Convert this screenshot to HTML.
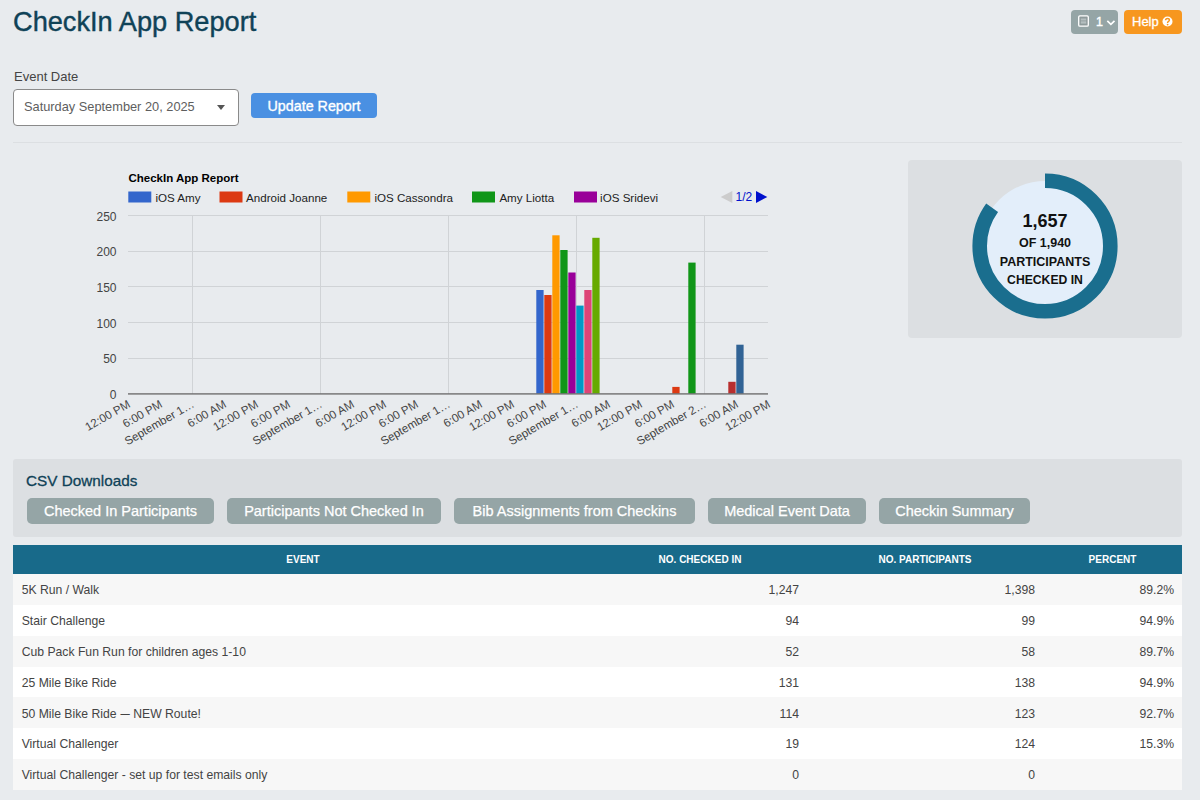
<!DOCTYPE html>
<html><head><meta charset="utf-8">
<style>
*{box-sizing:border-box;margin:0;padding:0}
html,body{width:1200px;height:800px;overflow:hidden;background:#e8ebee;font-family:"Liberation Sans",sans-serif;color:#333}
.abs{position:absolute}
#title{left:13px;top:3.5px;font-size:27.2px;color:#0f4257;line-height:36px;white-space:nowrap;-webkit-text-stroke:0.4px #0f4257}
#tbtn{left:1071px;top:10px;width:47px;height:24px;background:#95a5a6;border-radius:4px}
#hbtn{left:1124px;top:10px;width:57.5px;height:24px;background:#f7971f;border-radius:4px;color:#fff;font-size:13px;line-height:24px;padding-left:8px;-webkit-text-stroke:0.3px #fff}
#lbl{left:14px;top:68.5px;font-size:13px;color:#444;line-height:16px}
#sel{left:13px;top:89px;width:226px;height:36.5px;background:#fff;border:1px solid #8a8a8a;border-radius:4px}
#seltxt{left:24px;top:99px;font-size:12.8px;color:#5e5e5e;line-height:16px;white-space:nowrap}
#caret{left:216.5px;top:104.5px;width:0;height:0;border-left:4.5px solid transparent;border-right:4.5px solid transparent;border-top:5.5px solid #555}
#upd{left:251px;top:93px;width:126px;height:25px;background:#4a90e2;border-radius:4px;color:#fff;font-size:14.3px;line-height:27px;text-align:center;-webkit-text-stroke:0.35px #fff}
#hr{left:13px;top:142px;width:1169px;height:1px;background:#dcdfe2}
#card{left:908px;top:160px;width:274px;height:178px;background:#dcdfe2;border-radius:4px}
#csv{left:13px;top:459px;width:1169px;height:78px;background:#dcdfe2;border-radius:3px}
#csvt{left:26px;top:471px;font-size:15.3px;color:#0f4257;line-height:20px;-webkit-text-stroke:0.3px #0f4257}
.cb{position:absolute;top:498px;height:26px;background:#95a5a6;border-radius:5px;color:#fff;font-size:14.5px;line-height:26px;text-align:center;white-space:nowrap;-webkit-text-stroke:0.25px #fff}
table{position:absolute;left:13px;top:545px;width:1169px;border-collapse:collapse;table-layout:fixed}
th{background:#186a8a;color:#fff;font-size:10px;font-weight:bold;height:29.3px;text-align:center;padding:0}
td{height:30.8px;font-size:12.2px;color:#444;padding:1.5px 8px 0 8.7px;white-space:nowrap}
td.r{text-align:right}
tr:nth-child(odd) td{background:#f7f7f7}
tr:nth-child(even) td{background:#fff}
</style></head><body>
<div id="title" class="abs">CheckIn App Report</div>
<div id="tbtn" class="abs"><svg width="47" height="24" style="position:absolute;left:0;top:0"><rect x="7.7" y="5.8" width="9.6" height="10.3" rx="1.2" fill="#8e9a9b" stroke="#fff" stroke-width="1.3"/><rect x="9.8" y="8.5" width="5.4" height="2" fill="#b4bebf"/><rect x="9.8" y="11.3" width="5.4" height="2.3" fill="#b4bebf"/><path d="M36.3 10.9 L39.9 14.3 L43.5 10.9" fill="none" stroke="#fff" stroke-width="1.7"/></svg><span style="position:absolute;left:25px;top:4px;font-size:12.5px;line-height:16px;color:#fff;-webkit-text-stroke:0.4px #fff">1</span></div>
<div id="hbtn" class="abs">Help<svg width="11" height="11" style="position:absolute;left:38px;top:6.3px"><circle cx="5.5" cy="5.5" r="5" fill="#fff"/><path d="M3.6 4.3 Q3.6 2.4 5.5 2.4 Q7.4 2.4 7.4 4.1 Q7.4 5.1 6.2 5.6 Q5.6 5.9 5.6 6.9" fill="none" stroke="#f7971f" stroke-width="1.5"/><circle cx="5.6" cy="8.6" r="0.9" fill="#f7971f"/></svg></div>
<div id="lbl" class="abs">Event Date</div>
<div id="sel" class="abs"></div>
<div id="seltxt" class="abs">Saturday September 20, 2025</div>
<div id="caret" class="abs"></div>
<div id="upd" class="abs">Update Report</div>
<div id="hr" class="abs"></div>

<div id="card" class="abs"></div>
<svg class="abs" style="left:908px;top:160px" width="274" height="178">
<circle cx="137" cy="86" r="65" fill="#e3eefa"/>
<circle cx="137" cy="86" r="65.3" fill="none" stroke="#1a6e8e" stroke-width="14.6" stroke-dasharray="348.1 1000" transform="rotate(-90 137 86)"/>
</svg>
<div class="abs" style="left:908px;top:160px;width:274px;text-align:center;font-weight:bold;color:#111">
<div style="position:absolute;left:0;width:274px;top:51px;font-size:18px;line-height:20px">1,657</div>
<div style="position:absolute;left:0;width:274px;top:75px;font-size:12.5px;line-height:16px">OF 1,940</div>
<div style="position:absolute;left:0;width:274px;top:93.5px;font-size:12.5px;line-height:16px">PARTICIPANTS</div>
<div style="position:absolute;left:0;width:274px;top:112px;font-size:12.2px;line-height:16px">CHECKED IN</div>
</div>

<svg class="abs" style="left:0;top:0" width="1200" height="460" font-family="Liberation Sans">
<text x="128.5" y="182" font-size="11.5" font-weight="bold" fill="#000">CheckIn App Report</text>
<rect x="128.3" y="191.5" width="23" height="11" fill="#3366cc"/>
<text x="155.4" y="201.8" font-size="11.6" fill="#222">iOS Amy</text>
<rect x="219.5" y="191.5" width="23" height="11" fill="#dc3912"/>
<text x="246.1" y="201.8" font-size="11.6" fill="#222">Android Joanne</text>
<rect x="347.3" y="191.5" width="23" height="11" fill="#ff9900"/>
<text x="374.4" y="201.8" font-size="11.6" fill="#222">iOS Cassondra</text>
<rect x="472" y="191.5" width="23" height="11" fill="#109618"/>
<text x="499.4" y="201.8" font-size="11.6" fill="#222">Amy Liotta</text>
<rect x="574" y="191.5" width="23" height="11" fill="#990099"/>
<text x="600.1" y="201.8" font-size="11.6" fill="#222">iOS Sridevi</text>
<path d="M720.7 197 L732.3 191 L732.3 203 Z" fill="#ccc"/>
<text x="735.5" y="201.3" font-size="12" fill="#0011cc">1/2</text>
<path d="M767.3 197 L756 191 L756 203 Z" fill="#0011cc"/>
<rect x="128" y="358" width="640" height="1" fill="#d0d3d6"/>
<rect x="128" y="322" width="640" height="1" fill="#d0d3d6"/>
<rect x="128" y="286" width="640" height="1" fill="#d0d3d6"/>
<rect x="128" y="251" width="640" height="1" fill="#d0d3d6"/>
<rect x="128" y="215" width="640" height="1" fill="#d0d3d6"/>
<rect x="192" y="215.7" width="1" height="178.10000000000002" fill="#d0d3d6"/>
<rect x="320" y="215.7" width="1" height="178.10000000000002" fill="#d0d3d6"/>
<rect x="448" y="215.7" width="1" height="178.10000000000002" fill="#d0d3d6"/>
<rect x="576" y="215.7" width="1" height="178.10000000000002" fill="#d0d3d6"/>
<rect x="704" y="215.7" width="1" height="178.10000000000002" fill="#d0d3d6"/>
<text x="116.5" y="398.80" font-size="12" fill="#444" text-anchor="end">0</text>
<text x="116.5" y="363.18" font-size="12" fill="#444" text-anchor="end">50</text>
<text x="116.5" y="327.56" font-size="12" fill="#444" text-anchor="end">100</text>
<text x="116.5" y="291.94" font-size="12" fill="#444" text-anchor="end">150</text>
<text x="116.5" y="256.32" font-size="12" fill="#444" text-anchor="end">200</text>
<text x="116.5" y="220.70" font-size="12" fill="#444" text-anchor="end">250</text>
<rect x="536.3" y="290" width="7.3" height="103.80" fill="#3366cc"/>
<rect x="544.3" y="295" width="7.3" height="98.80" fill="#dc3912"/>
<rect x="552.3" y="235.3" width="7.3" height="158.50" fill="#ff9900"/>
<rect x="560.3" y="250" width="7.3" height="143.80" fill="#109618"/>
<rect x="568.3" y="272.5" width="7.3" height="121.30" fill="#990099"/>
<rect x="576.3" y="305.6" width="7.3" height="88.20" fill="#0099c6"/>
<rect x="584.3" y="290" width="7.3" height="103.80" fill="#dd4477"/>
<rect x="592.3" y="237.8" width="7.3" height="156.00" fill="#66aa00"/>
<rect x="672.3" y="386.9" width="7.3" height="6.90" fill="#dc3912"/>
<rect x="688.3" y="262.6" width="7.3" height="131.20" fill="#109618"/>
<rect x="728.3" y="381.8" width="7.3" height="12.00" fill="#b82e2e"/>
<rect x="736.3" y="344.7" width="7.3" height="49.10" fill="#316395"/>
<rect x="128" y="393.2" width="640" height="1.4" fill="#707070"/>
<text x="131" y="406.5" font-size="11.6" fill="#444" text-anchor="end" transform="rotate(-30 131 406.5)">12:00 PM</text>
<text x="163" y="406.5" font-size="11.6" fill="#444" text-anchor="end" transform="rotate(-30 163 406.5)">6:00 PM</text>
<text x="195" y="406.5" font-size="11.6" fill="#444" text-anchor="end" transform="rotate(-30 195 406.5)">September 1…</text>
<text x="227" y="406.5" font-size="11.6" fill="#444" text-anchor="end" transform="rotate(-30 227 406.5)">6:00 AM</text>
<text x="259" y="406.5" font-size="11.6" fill="#444" text-anchor="end" transform="rotate(-30 259 406.5)">12:00 PM</text>
<text x="291" y="406.5" font-size="11.6" fill="#444" text-anchor="end" transform="rotate(-30 291 406.5)">6:00 PM</text>
<text x="323" y="406.5" font-size="11.6" fill="#444" text-anchor="end" transform="rotate(-30 323 406.5)">September 1…</text>
<text x="355" y="406.5" font-size="11.6" fill="#444" text-anchor="end" transform="rotate(-30 355 406.5)">6:00 AM</text>
<text x="387" y="406.5" font-size="11.6" fill="#444" text-anchor="end" transform="rotate(-30 387 406.5)">12:00 PM</text>
<text x="419" y="406.5" font-size="11.6" fill="#444" text-anchor="end" transform="rotate(-30 419 406.5)">6:00 PM</text>
<text x="451" y="406.5" font-size="11.6" fill="#444" text-anchor="end" transform="rotate(-30 451 406.5)">September 1…</text>
<text x="483" y="406.5" font-size="11.6" fill="#444" text-anchor="end" transform="rotate(-30 483 406.5)">6:00 AM</text>
<text x="515" y="406.5" font-size="11.6" fill="#444" text-anchor="end" transform="rotate(-30 515 406.5)">12:00 PM</text>
<text x="547" y="406.5" font-size="11.6" fill="#444" text-anchor="end" transform="rotate(-30 547 406.5)">6:00 PM</text>
<text x="579" y="406.5" font-size="11.6" fill="#444" text-anchor="end" transform="rotate(-30 579 406.5)">September 1…</text>
<text x="611" y="406.5" font-size="11.6" fill="#444" text-anchor="end" transform="rotate(-30 611 406.5)">6:00 AM</text>
<text x="643" y="406.5" font-size="11.6" fill="#444" text-anchor="end" transform="rotate(-30 643 406.5)">12:00 PM</text>
<text x="675" y="406.5" font-size="11.6" fill="#444" text-anchor="end" transform="rotate(-30 675 406.5)">6:00 PM</text>
<text x="707" y="406.5" font-size="11.6" fill="#444" text-anchor="end" transform="rotate(-30 707 406.5)">September 2…</text>
<text x="739" y="406.5" font-size="11.6" fill="#444" text-anchor="end" transform="rotate(-30 739 406.5)">6:00 AM</text>
<text x="771" y="406.5" font-size="11.6" fill="#444" text-anchor="end" transform="rotate(-30 771 406.5)">12:00 PM</text>
</svg>

<div id="csv" class="abs"></div>
<div id="csvt" class="abs">CSV Downloads</div>
<div class="cb" style="left:27px;width:187px">Checked In Participants</div>
<div class="cb" style="left:227px;width:214px">Participants Not Checked In</div>
<div class="cb" style="left:454px;width:241px">Bib Assignments from Checkins</div>
<div class="cb" style="left:708px;width:158px">Medical Event Data</div>
<div class="cb" style="left:879px;width:151px">Checkin Summary</div>

<table>
<thead><tr><th style="width:580px">EVENT</th><th style="width:214px">NO. CHECKED IN</th><th style="width:236px">NO. PARTICIPANTS</th><th>PERCENT</th></tr></thead>
<tbody>
<tr><td>5K Run / Walk</td><td class="r">1,247</td><td class="r">1,398</td><td class="r">89.2%</td></tr>
<tr><td>Stair Challenge</td><td class="r">94</td><td class="r">99</td><td class="r">94.9%</td></tr>
<tr><td>Cub Pack Fun Run for children ages 1-10</td><td class="r">52</td><td class="r">58</td><td class="r">89.7%</td></tr>
<tr><td>25 Mile Bike Ride</td><td class="r">131</td><td class="r">138</td><td class="r">94.9%</td></tr>
<tr><td>50 Mile Bike Ride <span style="display:inline-block;transform:scaleX(0.76);margin:0 -1px 0 -1.3px">—</span> NEW Route!</td><td class="r">114</td><td class="r">123</td><td class="r">92.7%</td></tr>
<tr><td>Virtual Challenger</td><td class="r">19</td><td class="r">124</td><td class="r">15.3%</td></tr>
<tr><td>Virtual Challenger - set up for test emails only</td><td class="r">0</td><td class="r">0</td><td class="r"></td></tr>
</tbody>
</table>
</body></html>
